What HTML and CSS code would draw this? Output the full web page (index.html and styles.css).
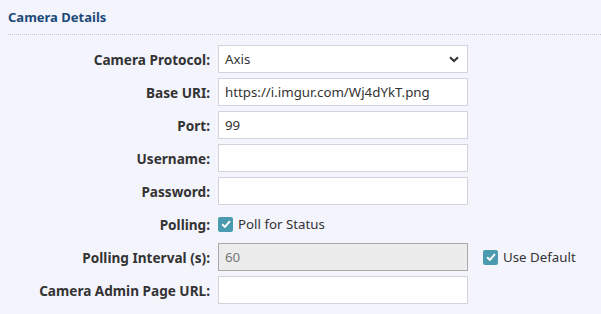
FILE: index.html
```html
<!DOCTYPE html>
<html lang="en">
<head>
    <meta charset="UTF-8">
    <title>Camera Details</title>
    <link rel="stylesheet" href="styles.css">
</head>
<body>
    <div class="panel">
        <!-- Header -->
        <div class="panel-title">Camera Details</div>

        <!-- Form -->
        <div class="form-grid">
            <label class="field-label">Camera Protocol:</label>
            <div class="select-box">
                <span>Axis</span>
                <svg class="chevron" width="10" height="7" viewBox="0 0 10 7"><path d="M1 1.2 L5 5 L9 1.2" fill="none" stroke="#333" stroke-width="2"/></svg>
            </div>
            <div></div>

            <label class="field-label">Base URI:</label>
            <input class="text-input" type="text" value="https://i.imgur.com/Wj4dYkT.png">
            <div></div>

            <label class="field-label">Port:</label>
            <input class="text-input" type="text" value="99">
            <div></div>

            <label class="field-label">Username:</label>
            <input class="text-input" type="text">
            <div></div>

            <label class="field-label">Password:</label>
            <input class="text-input" type="password">
            <div></div>

            <label class="field-label">Polling:</label>
            <div class="check-row">
                <span class="check-box"><svg width="14" height="14" viewBox="0 0 14 14"><path d="M3.2 7.2 L5.9 9.9 L10.9 4.2" fill="none" stroke="#fff" stroke-width="2"/></svg></span>
                <span>Poll for Status</span>
            </div>
            <div></div>

            <label class="field-label">Polling Interval (s):</label>
            <input class="text-input disabled" type="text" value="60" disabled>
            <div class="check-row extra">
                <span class="check-box"><svg width="14" height="14" viewBox="0 0 14 14"><path d="M3.2 7.2 L5.9 9.9 L10.9 4.2" fill="none" stroke="#fff" stroke-width="2"/></svg></span>
                <span>Use Default</span>
            </div>

            <label class="field-label">Camera Admin Page URL:</label>
            <input class="text-input" type="text">
            <div></div>
        </div>
    </div>
</body>
</html>
```

FILE: styles.css
```css
* {
    margin: 0;
    padding: 0;
    box-sizing: border-box;
}
body {
    font-family: "Noto Sans", "Open Sans", sans-serif;
    background-color: #f4f4fd;
    color: #333;
    font-size: 13.3px;
}
.panel {
    padding: 0 0 0 8px;
}
.panel-title {
    color: #1b4a78;
    font-weight: bold;
    font-size: 13px;
    height: 35px;
    padding-top: 8px;
    border-bottom: 1px dotted #c4c4d0;
}

/* Form */
.form-grid {
    display: grid;
    grid-template-columns: 202px 250px auto;
    column-gap: 8px;
    row-gap: 5px;
    margin-top: 10px;
    grid-auto-rows: 28px;
}
.field-label {
    font-weight: bold;
    font-size: 13.6px;
    text-align: right;
    align-self: center;
}
.text-input,
.select-box {
    height: 28px;
    width: 250px;
    border: 1px solid #d3d3e0;
    background: #fff;
    font-family: inherit;
    font-size: 13.3px;
    color: #333;
    padding: 0 6px;
}
.select-box {
    display: flex;
    align-items: center;
    justify-content: space-between;
    padding-right: 8px;
}
.text-input.disabled {
    background: #ececec;
    border-color: #a9a9a9;
    color: #777;
}

/* Checkboxes */
.check-row {
    display: flex;
    align-items: center;
    gap: 5px;
}
.check-row.extra {
    margin-left: 7px;
}
.check-box {
    width: 15px;
    height: 15px;
    border-radius: 2px;
    background: #4a9bb0;
    display: flex;
    align-items: center;
    justify-content: center;
}
```
